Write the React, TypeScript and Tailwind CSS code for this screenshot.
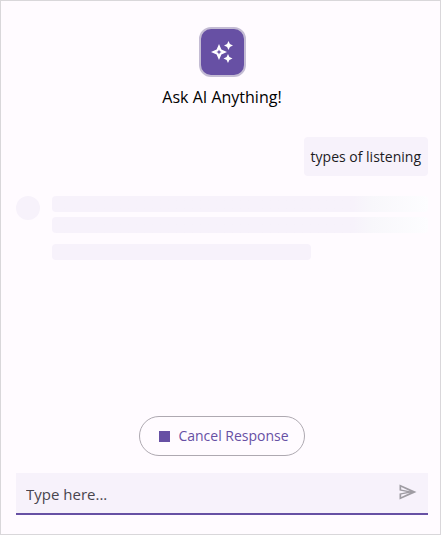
import React from 'react';

interface Message {
  id: number;
  text: string;
}

const messages: Message[] = [{ id: 1, text: 'types of listening' }];

const SparkleIcon: React.FC = () => (
  <svg viewBox="0 0 24 24" className="w-6 h-6" fill="currentColor" aria-hidden="true">
    <path
      fillRule="evenodd"
      d="M9 4 L11.4 9.6 L17 12 L11.4 14.4 L9 20 L6.6 14.4 L1 12 L6.6 9.6 Z M9 9.4 L8.2 11.2 L6.4 12 L8.2 12.8 L9 14.6 L9.8 12.8 L11.6 12 L9.8 11.2 Z"
    />
    <path d="M18.5 1 L19.9 4.1 L23 5.5 L19.9 6.9 L18.5 10 L17.1 6.9 L14 5.5 L17.1 4.1 Z" />
    <path d="M18 14 L19.4 17.1 L22.5 18.5 L19.4 19.9 L18 23 L16.6 19.9 L13.5 18.5 L16.6 17.1 Z" />
  </svg>
);

const SendIcon: React.FC = () => (
  <svg viewBox="0 0 18 16" className="w-[18px] h-4" fill="currentColor" aria-hidden="true">
    <path
      fillRule="evenodd"
      d="M0.5 0.5 L17.5 8 L0.5 15.5 V9.4 L8 8 L0.5 6.6 Z M2.2 3 V5.4 L11.2 7.3 Z M2.2 13 V10.6 L11.2 8.7 Z"
    />
  </svg>
);

const LoadingSkeleton: React.FC = () => (
  <div className="flex gap-3 mt-5" role="status" aria-label="Loading response">
    <div className="w-6 h-6 shrink-0 rounded-full bg-[#f7f2fb]" />
    <div className="flex-1">
      <div className="h-4 rounded bg-linear-to-r from-[#f7f2fb] from-80% via-[#f8f7fb] via-85% to-[#fdfdff]" />
      <div className="h-4 mt-[5px] rounded bg-linear-to-r from-[#f7f2fb] from-80% via-[#f8f7fb] via-85% to-[#fdfdff]" />
      <div className="h-4 mt-[11px] w-[69%] rounded bg-[#f7f2fb]" />
    </div>
  </div>
);

const App: React.FC = () => {
  return (
    <main className="min-h-screen flex flex-col border border-[#d9d7da] bg-[#fffbff] pt-[26px] pb-[19px] pl-[15px] pr-3 font-['Open_Sans','Noto_Sans',sans-serif]">
      {/* Header */}
      <header className="flex flex-col items-center">
        <div className="w-[47px] h-[50px] flex items-center justify-center rounded-xl border-2 border-[#c4bcd4] bg-[#6750a4] text-white">
          <SparkleIcon />
        </div>
        <h1 className="mt-2 text-base leading-6 text-black">Ask AI Anything!</h1>
      </header>

      {/* Conversation */}
      <section className="flex-1 mt-7">
        {messages.map((message) => (
          <div key={message.id} className="flex justify-end">
            <p className="px-[7px] py-[9px] rounded bg-[#f7f2fb] text-sm leading-[21px] text-[#1c1b1f]">
              {message.text}
            </p>
          </div>
        ))}
        <LoadingSkeleton />
      </section>

      {/* Footer */}
      <footer>
        <div className="flex justify-center">
          <button
            type="button"
            className="h-10 pl-[19px] pr-[15px] flex items-center gap-2 rounded-full border border-[#aea9b1] text-sm text-[#6750a4]"
          >
            <span className="w-[11px] h-[11px] bg-[#6750a4]" />
            Cancel Response
          </button>
        </div>
        <form className="mt-[17px] h-[42px] pl-[10px] pr-[11px] flex items-center border-b-2 border-[#6750a4] bg-[#f7f2fb]">
          <input
            type="text"
            aria-label="Message"
            placeholder="Type here..."
            className="flex-1 min-w-0 pt-[2px] bg-transparent text-[15px] text-[#1c1b1f] placeholder:text-[#49454e] outline-none"
          />
          <button type="button" aria-label="Send" className="pb-[2px] text-[#9f9ca3]">
            <SendIcon />
          </button>
        </form>
      </footer>
    </main>
  );
};

export default App;
